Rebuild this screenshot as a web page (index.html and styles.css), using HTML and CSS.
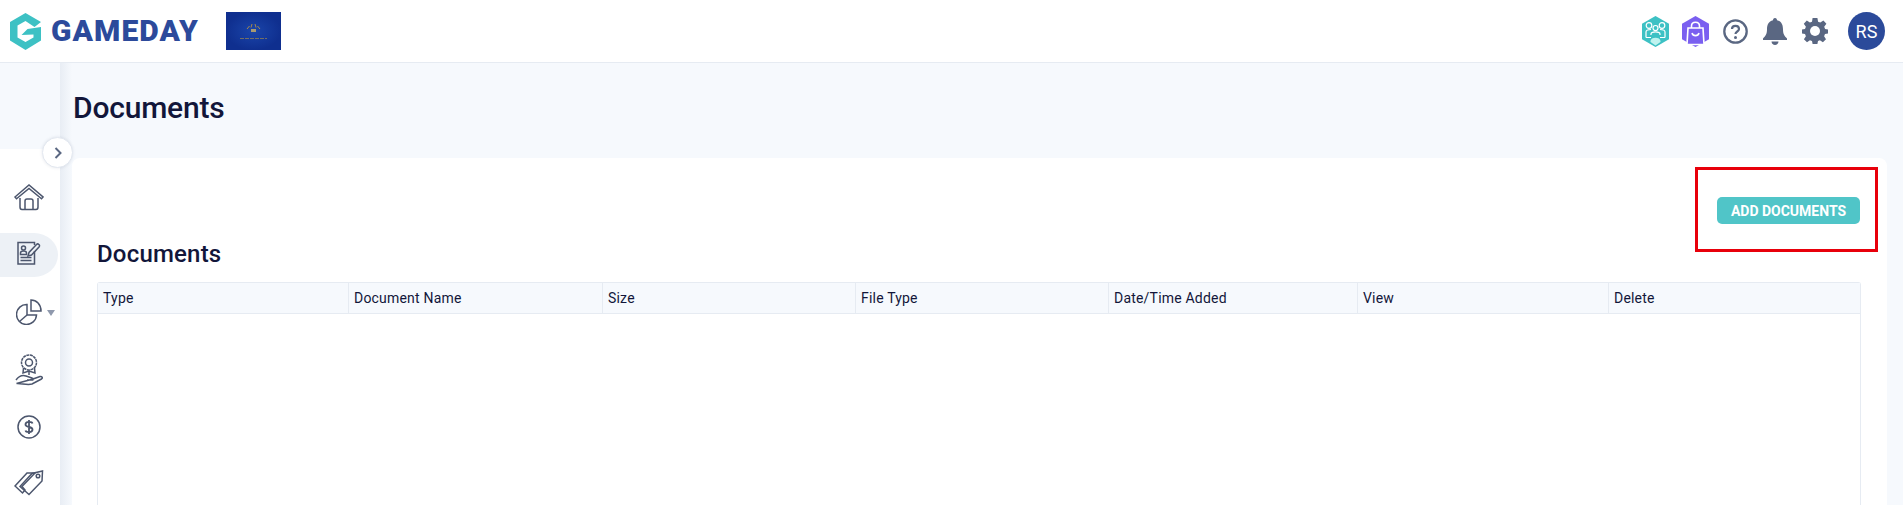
FILE: index.html
```html
<!DOCTYPE html>
<html lang="en">
<head>
<meta charset="utf-8">
<title>Documents</title>
<link rel="stylesheet" href="styles.css">
</head>
<body>
<header class="topbar">
  <div class="brand">
    <svg class="brand-mark" width="31" height="37" viewBox="0 0 31 37"><path d="M15.500 0 31 9 24.500 14 15.500 8 7.500 12.500V24.500L15.500 29 23.500 24.500V21.500L11.500 22 17.500 16 31 14V27.500L15.500 37 0 27.500V9Z" fill="#3dc1c4"/></svg>
    <span class="brand-name">GAMEDAY</span>
  </div>
  <svg class="org-logo" width="55" height="38" viewBox="0 0 55 38">
    <defs><radialGradient id="orgbg"><stop offset="0" stop-color="#1a45aa"/><stop offset="1" stop-color="#0f2f8f"/></radialGradient></defs>
    <rect width="55" height="38" fill="url(#orgbg)"/>
    <path d="M21 17 23.500 14M25 15.500 26 12M30 15.500 29 12M34 17 31.500 14" stroke="#a98a4a" stroke-width="1"/>
    <rect x="25" y="17" width="5" height="3" fill="#a99a70"/>
    <path d="M14 26.500H41" stroke="#8a7c58" stroke-width=".8" stroke-dasharray="4 1"/>
  </svg>
  <div class="top-actions">
    <span class="top-icon">
      <svg width="27" height="31" viewBox="0 0 27 31"><path d="M13.500 0 27 7.700V23.300L13.500 31 0 23.300V7.700Z" fill="#3dc1c4"/><g fill="none" stroke="#fff" stroke-width="1.200"><circle cx="7" cy="9.500" r="2.800"/><circle cx="20" cy="9.500" r="2.800"/><circle cx="13.500" cy="12" r="2.500"/><path d="M4 21.500V16C4 14.300 6 13.500 9 13.500M23 21.500V16C23 14.300 21 13.500 18 13.500M9 19V18C9 16.500 11 15.800 13.500 15.800S18 16.500 18 18V19M4 21.500H9M18 21.500H23"/></g><path d="M8.500 25C8.500 20.500 18.500 20.500 18.500 25V26L13.500 29.500 8.500 26Z" fill="#bff3ef"/></svg>
    </span>
    <span class="top-icon">
      <svg width="27" height="31" viewBox="0 0 27 31"><path d="M13.500 0 27 7.700V23.300L13.500 31 0 23.300V7.700Z" fill="#7a5ff0"/><path d="M6 12H21L22 28.500H5Z" fill="#7a5ff0" stroke="#fff" stroke-width="1.600"/><path d="M9.500 12V10C9.500 5 17.500 5 17.500 10V12" fill="none" stroke="#fff" stroke-width="1.600"/><path d="M10 17C11 20.500 16 20.500 17 17" fill="none" stroke="#fff" stroke-width="1.600"/></svg>
    </span>
    <span class="top-icon">
      <svg width="25" height="25" viewBox="0 0 25 25"><circle cx="12.500" cy="12.500" r="11.200" fill="none" stroke="#5a6782" stroke-width="2.300"/><path d="M9 10C9 5.800 16 5.800 16 10C16 12.500 12.500 12.500 12.500 15" fill="none" stroke="#5a6782" stroke-width="2.200"/><circle cx="12.500" cy="18.500" r="1.500" fill="#5a6782"/></svg>
    </span>
    <span class="top-icon">
      <svg width="24" height="27" viewBox="0 0 24 27"><path d="M12 0C13.500 0 14 1 14 2.300 18.500 3.300 20 7 20 11.500 20 16 21.500 18 24 20.500V22H0V20.500C2.500 18 4 16 4 11.500 4 7 5.500 3.300 10 2.300 10 1 10.500 0 12 0Z" fill="#5a6782"/><path d="M8.500 23.500H15.500C15.500 28 8.500 28 8.500 23.500Z" fill="#5a6782"/></svg>
    </span>
    <span class="top-icon">
      <svg width="26" height="26" viewBox="0 0 26 26"><path d="M10.600 0H15.400L16.100 3.700 18.300 4.600 21.400 2.500 24.400 5.800 22.200 8.800 23.100 11 26 11.600V15.400L23 16 22.100 18.200 24 21.300 20.900 24.200 17.900 22.200 16 23 15.400 26H10.600L10 23 7.900 22.200 5 24.200 1.900 21.200 3.900 18.200 3 16 0 15.400V11.600L3 11 3.900 8.800 1.800 5.800 4.800 2.600 7.900 4.600 10 3.700Z" fill="#5a6782"/><circle cx="13" cy="13" r="5" fill="#fff"/></svg>
    </span>
    <span class="avatar">RS</span>
  </div>
</header>
<div class="shell">
  <aside class="sidebar">
    <button class="collapse" type="button" aria-label="Expand">
      <svg width="10" height="12" viewBox="0 0 10 12"><path d="M2.500 1 7.500 6 2.500 11" fill="none" stroke="#5a6782" stroke-width="2"/></svg>
    </button>
    <nav class="side-nav">
      <a class="side-item">
        <svg width="30" height="28" viewBox="0 0 30 28" class="side-icon"><path d="M1 14 15 2 29 14 27.500 15.800 15 5.500 2.500 15.800Z"/><path d="M6 15V24C6 25.500 7 26.500 8 26.500H22C23 26.500 24 25.500 24 24V15"/><path d="M11 26.500V18C11 17 12 16 13 16H17C18 16 19 17 19 18V26.500"/></svg>
      </a>
      <a class="side-item active">
        <svg width="24" height="24" viewBox="0 0 24 24" class="side-icon icon-raised"><path d="M17.500 10V23H1V1.500H17.500V4"/><circle cx="6.500" cy="7" r="2"/><path d="M3.500 13.500V12C3.500 10.500 5 10 6.500 10S9.500 10.500 9.500 12V13.500Z"/><path d="M3.500 16.500H14.500M3.500 19.500H14.500"/><path d="M11 15 12 11.500 19.500 3.500C21 2 23.500 4 22 6L14.500 14Z"/></svg>
      </a>
      <a class="side-item">
        <svg width="26" height="26" viewBox="0 0 26 26" class="side-icon"><path d="M11 5.500A10 10 0 1 0 20.500 16H11Z"/><path d="M11 16 3.500 22.500"/><path d="M15 1C20.500 1 25 5.500 25 12H15Z"/></svg>
        <span class="caret"></span>
      </a>
      <a class="side-item">
        <svg width="28" height="32" viewBox="0 0 28 32" class="side-icon"><circle cx="14" cy="8.500" r="7.500" stroke-dasharray="3 .6"/><circle cx="14" cy="8.500" r="3.500"/><path d="M8.500 14 8 19 14 17 20 19 19.500 14"/><path d="M14 17V21"/><path d="M1 26C4 22 8 21 11 22L17 24C19 24.500 18.500 26.500 16 26H12M18 25 25 22.500C27 22 28 24 26.500 25L17 30C12 31.500 6 29 1.500 29.500Z"/></svg>
      </a>
      <a class="side-item">
        <svg width="24" height="24" viewBox="0 0 24 24" class="side-icon"><circle cx="12" cy="12" r="11"/><path d="M15.500 8.500C15 6.500 8.500 6 8.500 9.500 8.500 13 15.500 11 15.500 14.500 15.500 18 9 17.500 8.500 15.500M12 5V19" stroke-width="1.800"/></svg>
      </a>
      <a class="side-item">
        <svg width="30" height="26" viewBox="0 0 30 26" class="side-icon icon-raised"><path d="M1 16 13 3H21L8 16.500 11 20 8.500 23Z"/><path d="M6 16.500 18 3.500 28.500 1 28 11 15 24.500Z"/><circle cx="24" cy="6" r="1.800"/></svg>
      </a>
    </nav>
  </aside>
  <main class="main">
    <div class="page-head"><h1 class="page-title">Documents</h1></div>
    <section class="card">
      <div class="toolbar"><a class="btn-add">ADD DOCUMENTS</a></div>
      <div class="callout"></div>
      <h2 class="section-title">Documents</h2>
      <div class="table">
        <div class="table-head">
          <div class="th">Type</div>
          <div class="th">Document Name</div>
          <div class="th">Size</div>
          <div class="th">File Type</div>
          <div class="th">Date/Time Added</div>
          <div class="th">View</div>
          <div class="th">Delete</div>
        </div>
      </div>
    </section>
  </main>
</div>
</body>
</html>
```
FILE: styles.css
```css
* { box-sizing: border-box; }
html, body { margin: 0; height: 505px; overflow: hidden; background: #f6f9fd; }
body { font-family: Roboto, "Liberation Sans", sans-serif; color: #12163a; }

.topbar { display: flex; align-items: center; height: 63px; padding: 0 18px 0 10px; background: #fff; border-bottom: 1px solid #e6ebf2; }
.brand { display: flex; align-items: center; width: 216px; }
.brand-mark { display: block; margin-right: 10px; }
.brand-name { font-size: 30px; font-weight: 900; line-height: 1; color: #2c4a9b; letter-spacing: 1.100px; }
.org-logo { display: block; margin-top: -1px; }
.top-actions { display: flex; align-items: center; margin-left: auto; }
.top-icon { display: flex; align-items: center; justify-content: center; width: 40px; height: 38px; }
.avatar { display: flex; align-items: center; justify-content: center; width: 37px; height: 38px; margin-left: 13px; border-radius: 50%; background: #2b4a9a; color: #fff; font-size: 18px; }

.shell { display: flex; height: 442px; }
.sidebar { position: relative; flex: none; width: 60px; padding-top: 86px; }
.side-nav { display: flex; flex-direction: column; gap: 13.6px; height: 100%; padding-top: 26px; background: #fff; }
.side-item { position: relative; display: flex; flex: none; align-items: center; justify-content: center; width: 58px; height: 44px; }
.side-item.active { background: #edf1f6; border-radius: 0 24px 24px 0 / 0 22px 22px 0; }
.side-icon { display: block; fill: none; stroke: #4c566d; stroke-width: 1.500; }
.icon-raised { margin-bottom: 3px; }
.caret { position: absolute; left: 47px; top: 20px; border: 4px solid transparent; border-top: 6px solid #8f99ad; border-bottom: 0; }
.collapse { position: absolute; left: 42px; top: 74px; z-index: 2; display: flex; align-items: center; justify-content: center; width: 31px; height: 31px; padding: 0; background: #fff; border: 1px solid #e3e8f0; border-radius: 50%; box-shadow: 0 0 3px rgba(90, 103, 130, .15); }

.main { flex: 1; min-width: 0; padding: 0 16px 0 12px; background: linear-gradient(to right, #e8edf4, #f6f9fd 12px); }
.page-head { display: flex; align-items: center; height: 95px; padding: 0 0 5px 1px; }
.page-title { margin: 0; font-size: 30px; font-weight: 500; line-height: 1; letter-spacing: -.2px; }
.card { position: relative; height: 347px; padding: 39px 26px 0 25px; background: #fff; border-radius: 8px 8px 0 0; }
.toolbar { display: flex; justify-content: flex-end; padding-right: 1px; }
.btn-add { display: flex; align-items: center; justify-content: center; width: 143px; height: 27px; background: #50c5c8; border-radius: 5px; color: #fff; font-size: 14px; font-weight: 700; }
.callout { position: absolute; top: 9px; right: 9px; width: 183px; height: 85px; border: 3px solid #e8000b; }
.section-title { display: flex; align-items: center; height: 58px; padding-top: 2px; margin: 0; font-size: 24px; font-weight: 500; line-height: 1; letter-spacing: .2px; }
.table { height: 223px; border: 1px solid #e6ebf2; border-bottom: 0; border-radius: 3px 3px 0 0; }
.table-head { display: grid; grid-template-columns: 250px 254px 253px 253px 249px 251px 1fr; height: 31px; background: #f6f9fd; border-bottom: 1px solid #e6ebf2; }
.th { display: flex; align-items: center; padding-left: 5px; font-size: 14px; letter-spacing: .2px; border-left: 1px solid #e6ebf2; }
.th:first-child { border-left: 0; }
```
